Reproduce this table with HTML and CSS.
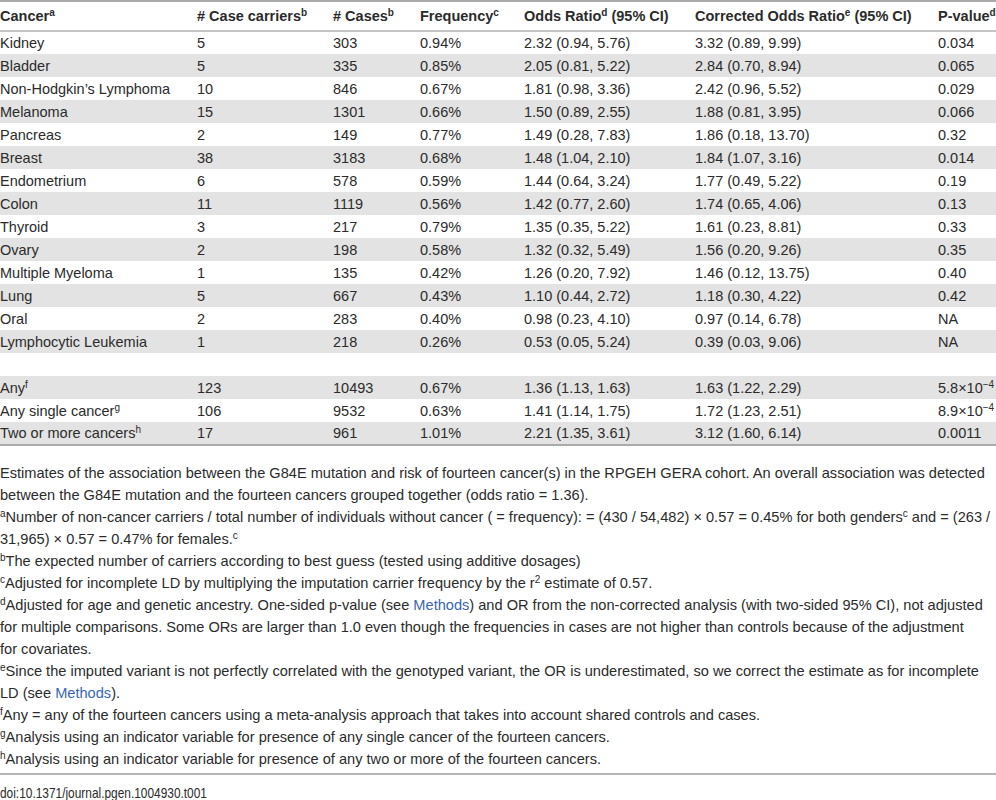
FILE: index.html
```html
<!DOCTYPE html>
<html lang="en">
<head>
  <meta charset="UTF-8">
  <title>Table 1 - G84E mutation and cancer risk</title>
  <meta name="viewport" content="width=device-width, initial-scale=1.0">
  <link rel="stylesheet" href="styles.css">
</head>
<body>

  <table class="tabel">
    <colgroup>
      <col style="width:197px">
      <col style="width:136px">
      <col style="width:87px">
      <col style="width:104px">
      <col style="width:171px">
      <col style="width:243px">
      <col style="width:58px">
    </colgroup>
    <thead>
      <tr>
        <th>Cancer<sup>a</sup></th>
        <th># Case carriers<sup>b</sup></th>
        <th># Cases<sup>b</sup></th>
        <th>Frequency<sup>c</sup></th>
        <th>Odds Ratio<sup>d</sup> (95% CI)</th>
        <th>Corrected Odds Ratio<sup>e</sup> (95% CI)</th>
        <th>P-value<sup>d</sup></th>
      </tr>
    </thead>
    <tbody>
      <tr><td>Kidney</td><td>5</td><td>303</td><td>0.94%</td><td>2.32 (0.94, 5.76)</td><td>3.32 (0.89, 9.99)</td><td>0.034</td></tr>
      <tr><td>Bladder</td><td>5</td><td>335</td><td>0.85%</td><td>2.05 (0.81, 5.22)</td><td>2.84 (0.70, 8.94)</td><td>0.065</td></tr>
      <tr><td>Non-Hodgkin’s Lymphoma</td><td>10</td><td>846</td><td>0.67%</td><td>1.81 (0.98, 3.36)</td><td>2.42 (0.96, 5.52)</td><td>0.029</td></tr>
      <tr><td>Melanoma</td><td>15</td><td>1301</td><td>0.66%</td><td>1.50 (0.89, 2.55)</td><td>1.88 (0.81, 3.95)</td><td>0.066</td></tr>
      <tr><td>Pancreas</td><td>2</td><td>149</td><td>0.77%</td><td>1.49 (0.28, 7.83)</td><td>1.86 (0.18, 13.70)</td><td>0.32</td></tr>
      <tr><td>Breast</td><td>38</td><td>3183</td><td>0.68%</td><td>1.48 (1.04, 2.10)</td><td>1.84 (1.07, 3.16)</td><td>0.014</td></tr>
      <tr><td>Endometrium</td><td>6</td><td>578</td><td>0.59%</td><td>1.44 (0.64, 3.24)</td><td>1.77 (0.49, 5.22)</td><td>0.19</td></tr>
      <tr><td>Colon</td><td>11</td><td>1119</td><td>0.56%</td><td>1.42 (0.77, 2.60)</td><td>1.74 (0.65, 4.06)</td><td>0.13</td></tr>
      <tr><td>Thyroid</td><td>3</td><td>217</td><td>0.79%</td><td>1.35 (0.35, 5.22)</td><td>1.61 (0.23, 8.81)</td><td>0.33</td></tr>
      <tr><td>Ovary</td><td>2</td><td>198</td><td>0.58%</td><td>1.32 (0.32, 5.49)</td><td>1.56 (0.20, 9.26)</td><td>0.35</td></tr>
      <tr><td>Multiple Myeloma</td><td>1</td><td>135</td><td>0.42%</td><td>1.26 (0.20, 7.92)</td><td>1.46 (0.12, 13.75)</td><td>0.40</td></tr>
      <tr><td>Lung</td><td>5</td><td>667</td><td>0.43%</td><td>1.10 (0.44, 2.72)</td><td>1.18 (0.30, 4.22)</td><td>0.42</td></tr>
      <tr><td>Oral</td><td>2</td><td>283</td><td>0.40%</td><td>0.98 (0.23, 4.10)</td><td>0.97 (0.14, 6.78)</td><td>NA</td></tr>
      <tr><td>Lymphocytic Leukemia</td><td>1</td><td>218</td><td>0.26%</td><td>0.53 (0.05, 5.24)</td><td>0.39 (0.03, 9.06)</td><td>NA</td></tr>
      <tr><td></td><td></td><td></td><td></td><td></td><td></td><td></td></tr>
      <tr><td>Any<sup>f</sup></td><td>123</td><td>10493</td><td>0.67%</td><td>1.36 (1.13, 1.63)</td><td>1.63 (1.22, 2.29)</td><td>5.8×10<sup>−4</sup></td></tr>
      <tr><td>Any single cancer<sup>g</sup></td><td>106</td><td>9532</td><td>0.63%</td><td>1.41 (1.14, 1.75)</td><td>1.72 (1.23, 2.51)</td><td>8.9×10<sup>−4</sup></td></tr>
      <tr><td>Two or more cancers<sup>h</sup></td><td>17</td><td>961</td><td>1.01%</td><td>2.21 (1.35, 3.61)</td><td>3.12 (1.60, 6.14)</td><td>0.0011</td></tr>
    </tbody>
  </table>

  <div class="catatan">
    <p>Estimates of the association between the G84E mutation and risk of fourteen cancer(s) in the RPGEH GERA cohort. An overall association was detected between the G84E mutation and the fourteen cancers grouped together (odds ratio = 1.36).</p>
    <p><sup>a</sup>Number of non-cancer carriers / total number of individuals without cancer ( = frequency): = (430 / 54,482) × 0.57 = 0.45% for both genders<sup>c</sup> and = (263 / 31,965) × 0.57 = 0.47% for females.<sup>c</sup></p>
    <p><sup>b</sup>The expected number of carriers according to best guess (tested using additive dosages)</p>
    <p><sup>c</sup>Adjusted for incomplete LD by multiplying the imputation carrier frequency by the r<sup>2</sup> estimate of 0.57.</p>
    <p><sup>d</sup>Adjusted for age and genetic ancestry. One-sided p-value (see <a href="#">Methods</a>) and OR from the non-corrected analysis (with two-sided 95% CI), not adjusted for multiple comparisons. Some ORs are larger than 1.0 even though the frequencies in cases are not higher than controls because of the adjustment<br>for covariates.</p>
    <p><sup>e</sup>Since the imputed variant is not perfectly correlated with the genotyped variant, the OR is underestimated, so we correct the estimate as for incomplete<br>LD (see <a href="#">Methods</a>).</p>
    <p><sup>f</sup>Any = any of the fourteen cancers using a meta-analysis approach that takes into account shared controls and cases.</p>
    <p><sup>g</sup>Analysis using an indicator variable for presence of any single cancer of the fourteen cancers.</p>
    <p><sup>h</sup>Analysis using an indicator variable for presence of any two or more of the fourteen cancers.</p>
  </div>

  <div class="doi"><span>doi:10.1371/journal.pgen.1004930.t001</span></div>

</body>
</html>
```

FILE: styles.css
```css
* { box-sizing: border-box; }
body {
  margin: 0;
  font-family: "Liberation Sans", Arial, sans-serif;
  font-size: 14.5px;
  color: #2b2b2b;
  background: #ffffff;
  width: 996px;
}
sup {
  font-size: 10px;
  line-height: 0;
  vertical-align: 5px;
}
.tabel {
  width: 996px;
  table-layout: fixed;
  border-collapse: collapse;
  border-top: 2px solid #ababab;
  border-bottom: 2px solid #ababab;
}
.tabel th {
  text-align: left;
  font-weight: bold;
  height: 30px;
  padding: 0;
  border-bottom: 2px solid #c4c4c4;
  white-space: nowrap;
}
.tabel td {
  height: 23px;
  padding: 0;
  white-space: nowrap;
}
.tabel tbody tr:nth-child(even) td {
  background: #e3e3e3;
}
.catatan {
  margin-top: 16px;
  padding-bottom: 3px;
  border-bottom: 2px solid #b5b5b5;
  font-size: 14.6px;
  line-height: 22px;
}
.catatan p {
  margin: 0;
}
.catatan a {
  color: #3b66b1;
  text-decoration: none;
}
.doi {
  margin-top: 7px;
  line-height: 22px;
}
.doi span {
  display: inline-block;
  transform: scaleX(0.82);
  transform-origin: left center;
}
```
